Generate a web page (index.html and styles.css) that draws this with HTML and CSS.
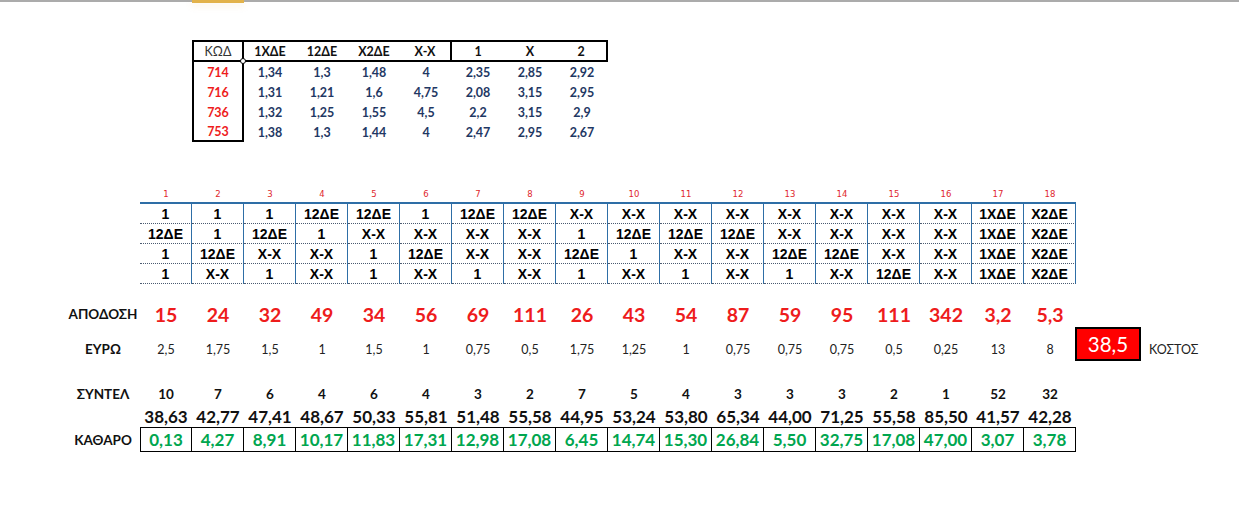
FILE: index.html
```html
<!DOCTYPE html>
<html lang="el">
<head>
<meta charset="utf-8">
<title>Sheet</title>
<link rel="stylesheet" href="styles.css">
</head>
<body>
<div class="topbar"><span class="sel"></span></div>

<div class="odds">
  <div class="h kod">ΚΩΔ<span class="handle"></span></div>
  <div class="h">1ΧΔΕ</div>
  <div class="h">12ΔΕ</div>
  <div class="h">Χ2ΔΕ</div>
  <div class="h sep">Χ-Χ</div>
  <div class="h">1</div>
  <div class="h">Χ</div>
  <div class="h sep">2</div>

  <div class="c code">714</div><div class="c">1,34</div><div class="c">1,3</div><div class="c">1,48</div><div class="c">4</div><div class="c">2,35</div><div class="c">2,85</div><div class="c">2,92</div>
  <div class="c code">716</div><div class="c">1,31</div><div class="c">1,21</div><div class="c">1,6</div><div class="c">4,75</div><div class="c">2,08</div><div class="c">3,15</div><div class="c">2,95</div>
  <div class="c code">736</div><div class="c">1,32</div><div class="c">1,25</div><div class="c">1,55</div><div class="c">4,5</div><div class="c">2,2</div><div class="c">3,15</div><div class="c">2,9</div>
  <div class="c code last">753</div><div class="c">1,38</div><div class="c">1,3</div><div class="c">1,44</div><div class="c">4</div><div class="c">2,47</div><div class="c">2,95</div><div class="c">2,67</div>
</div>

<div class="nums">
  <span>1</span><span>2</span><span>3</span><span>4</span><span>5</span><span>6</span><span>7</span><span>8</span><span>9</span><span>10</span><span>11</span><span>12</span><span>13</span><span>14</span><span>15</span><span>16</span><span>17</span><span>18</span>
</div>

<div class="picks">
  <span>1</span><span>1</span><span>1</span><span>12ΔΕ</span><span>12ΔΕ</span><span>1</span><span>12ΔΕ</span><span>12ΔΕ</span><span>Χ-Χ</span><span>Χ-Χ</span><span>Χ-Χ</span><span>Χ-Χ</span><span>Χ-Χ</span><span>Χ-Χ</span><span>Χ-Χ</span><span>Χ-Χ</span><span>1ΧΔΕ</span><span>Χ2ΔΕ</span>
  <span>12ΔΕ</span><span>1</span><span>12ΔΕ</span><span>1</span><span>Χ-Χ</span><span>Χ-Χ</span><span>Χ-Χ</span><span>Χ-Χ</span><span>1</span><span>12ΔΕ</span><span>12ΔΕ</span><span>12ΔΕ</span><span>Χ-Χ</span><span>Χ-Χ</span><span>Χ-Χ</span><span>Χ-Χ</span><span>1ΧΔΕ</span><span>Χ2ΔΕ</span>
  <span>1</span><span>12ΔΕ</span><span>Χ-Χ</span><span>Χ-Χ</span><span>1</span><span>12ΔΕ</span><span>Χ-Χ</span><span>Χ-Χ</span><span>12ΔΕ</span><span>1</span><span>Χ-Χ</span><span>Χ-Χ</span><span>12ΔΕ</span><span>12ΔΕ</span><span>Χ-Χ</span><span>Χ-Χ</span><span>1ΧΔΕ</span><span>Χ2ΔΕ</span>
  <span>1</span><span>Χ-Χ</span><span>1</span><span>Χ-Χ</span><span>1</span><span>Χ-Χ</span><span>1</span><span>Χ-Χ</span><span>1</span><span>Χ-Χ</span><span>1</span><span>Χ-Χ</span><span>1</span><span>Χ-Χ</span><span>12ΔΕ</span><span>Χ-Χ</span><span>1ΧΔΕ</span><span>Χ2ΔΕ</span>
</div>

<div class="stats">
  <div class="label r1">ΑΠΟΔΟΣΗ</div>
  <span class="odd r1">15</span><span class="odd r1">24</span><span class="odd r1">32</span><span class="odd r1">49</span><span class="odd r1">34</span><span class="odd r1">56</span><span class="odd r1">69</span><span class="odd r1">111</span><span class="odd r1">26</span><span class="odd r1">43</span><span class="odd r1">54</span><span class="odd r1">87</span><span class="odd r1">59</span><span class="odd r1">95</span><span class="odd r1">111</span><span class="odd r1">342</span><span class="odd r1">3,2</span><span class="odd r1">5,3</span>

  <div class="label r2">ΕΥΡΩ</div>
  <span class="eur r2">2,5</span><span class="eur r2">1,75</span><span class="eur r2">1,5</span><span class="eur r2">1</span><span class="eur r2">1,5</span><span class="eur r2">1</span><span class="eur r2">0,75</span><span class="eur r2">0,5</span><span class="eur r2">1,75</span><span class="eur r2">1,25</span><span class="eur r2">1</span><span class="eur r2">0,75</span><span class="eur r2">0,75</span><span class="eur r2">0,75</span><span class="eur r2">0,5</span><span class="eur r2">0,25</span><span class="eur r2">13</span><span class="eur r2">8</span>
  <div class="cost r2">38,5</div>
  <div class="costlabel r2">ΚΟΣΤΟΣ</div>

  <div class="label r4">ΣΥΝΤΕΛ</div>
  <span class="coef r4">10</span><span class="coef r4">7</span><span class="coef r4">6</span><span class="coef r4">4</span><span class="coef r4">6</span><span class="coef r4">4</span><span class="coef r4">3</span><span class="coef r4">2</span><span class="coef r4">7</span><span class="coef r4">5</span><span class="coef r4">4</span><span class="coef r4">3</span><span class="coef r4">3</span><span class="coef r4">3</span><span class="coef r4">2</span><span class="coef r4">1</span><span class="coef r4">52</span><span class="coef r4">32</span>

  <div class="label r5"></div>
  <span class="tot r5">38,63</span><span class="tot r5">42,77</span><span class="tot r5">47,41</span><span class="tot r5">48,67</span><span class="tot r5">50,33</span><span class="tot r5">55,81</span><span class="tot r5">51,48</span><span class="tot r5">55,58</span><span class="tot r5">44,95</span><span class="tot r5">53,24</span><span class="tot r5">53,80</span><span class="tot r5">65,34</span><span class="tot r5">44,00</span><span class="tot r5">71,25</span><span class="tot r5">55,58</span><span class="tot r5">85,50</span><span class="tot r5">41,57</span><span class="tot r5">42,28</span>

  <div class="label r6">ΚΑΘΑΡΟ</div>
  <span class="net first r6">0,13</span><span class="net r6">4,27</span><span class="net r6">8,91</span><span class="net r6">10,17</span><span class="net r6">11,83</span><span class="net r6">17,31</span><span class="net r6">12,98</span><span class="net r6">17,08</span><span class="net r6">6,45</span><span class="net r6">14,74</span><span class="net r6">15,30</span><span class="net r6">26,84</span><span class="net r6">5,50</span><span class="net r6">32,75</span><span class="net r6">17,08</span><span class="net r6">47,00</span><span class="net r6">3,07</span><span class="net r6">3,78</span>
</div>
</body>
</html>
```

FILE: styles.css
```css
* { box-sizing: border-box; }
html, body { margin: 0; padding: 0; background: #ffffff; }
body { font-family: "Lato", "Liberation Sans", sans-serif; color: #000; width: 1239px; height: 507px; overflow: hidden; }

.topbar { height: 2px; background: #ababab; display: flex; }
.sel { margin-left: 192px; width: 52px; height: 3px; background: #e2b24a; box-shadow: 0 3px 6px rgba(240, 200, 120, 0.25); }

/* top odds table */
.odds {
  margin: 38px 0 0 192px;
  display: grid;
  grid-template-columns: repeat(8, 52px);
  grid-template-rows: 22px repeat(4, 20px);
  width: 416px;
}
.odds .h {
  display: flex; align-items: center; justify-content: center;
  border-top: 2px solid #000; border-bottom: 2px solid #000;
  font-weight: 700; font-size: 12.5px; color: #111;
}
.odds .h.kod { font-weight: 400; color: #333; border-left: 2px solid #000; border-right: 2px solid #000; position: relative; font-size: 12.5px; }
.odds .h.sep { border-right: 2px solid #000; }
.handle {
  position: absolute; right: -4px; bottom: -4px; width: 6px; height: 6px;
  border: 1px solid #000; border-radius: 50%; background: #fff;
}
.odds .c {
  display: flex; align-items: center; justify-content: center; padding-top: 1px;
  font-weight: 700; font-size: 12.5px; color: #1f3864;
}
.odds .c.code { color: #ee1c1c; border-left: 2px solid #000; border-right: 2px solid #000; }
.odds .c.code.last { border-bottom: 2px solid #000; }

/* column numbers */
.nums {
  margin: 44px 0 0 140px;
  display: grid;
  grid-template-columns: repeat(18, 52px);
  height: 16px;
}
.nums span {
  display: flex; align-items: center; justify-content: center;
  font-family: "DejaVu Sans", "Liberation Sans", sans-serif;
  font-size: 8.5px; color: #e0262c;
}

/* picks grid */
.picks {
  margin-left: 140px;
  display: grid;
  grid-template-columns: repeat(18, 52px);
  grid-auto-rows: 20px;
  width: 936px;
  border-top: 2px solid #2e6ea6;
}
.picks span {
  display: flex; align-items: center; justify-content: center;
  border-right: 1px solid #2e6ea6;
  border-bottom: 1px dotted #4a5a70;
  font-family: "Liberation Sans", Arial, sans-serif;
  font-weight: 700; font-size: 14px; color: #000;
}

/* statistics block */
.stats {
  margin-top: 14px;
  display: grid;
  grid-template-columns: 140px repeat(18, 52px) 65px auto;
  grid-template-rows: 32px 38px 15px 22px 22px 25px;
}
.stats > * { display: flex; align-items: center; justify-content: center; }
.r1 { grid-row: 1; }
.r2 { grid-row: 2; }
.r4 { grid-row: 4; }
.r5 { grid-row: 5; }
.r6 { grid-row: 6; }
.label {
  grid-column: 1;
  padding-left: 66px;
  font-weight: 700; font-size: 13.5px; color: #111;
}
.odd { font-weight: 700; font-size: 19.5px; color: #ee1c1c; }
.eur { font-weight: 400; font-size: 12.5px; color: #222; }
.coef { font-weight: 700; font-size: 13.5px; color: #111; }
.tot { font-weight: 700; font-size: 17px; color: #111; }
.net {
  font-weight: 700; font-size: 17px; color: #00a64f;
  border-top: 1px solid #000; border-bottom: 1px solid #000; border-right: 1px solid #000;
}
.net.first { border-left: 1px solid #000; }
.cost {
  grid-column: 20;
  align-self: start;
  margin: -3px 0 0 -1px;
  height: 34px;
  background: #ff0000;
  border: 2px solid #000;
  color: #fff; font-size: 20.5px; font-weight: 400;
}
.costlabel {
  grid-column: 21;
  justify-content: flex-start;
  padding-left: 8px;
  font-size: 12.5px; font-weight: 400; color: #222;
}
```
